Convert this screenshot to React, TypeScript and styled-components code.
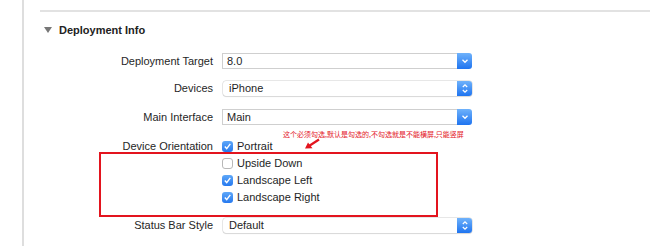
import React from "react";
import styled, { createGlobalStyle } from "styled-components";

const Global = createGlobalStyle`
  html, body { margin: 0; padding: 0; background: #fff; }
  body { font-family: "Liberation Sans", "Noto Sans", Arial, sans-serif; color: #262626; }
`;

const Page = styled.div`
  width: 650px;
  height: 246px;
  padding-left: 22px;
  box-sizing: border-box;
  overflow: hidden;
`;

const Panel = styled.div`
  position: relative;
  height: 246px;
  box-sizing: border-box;
  padding-top: 10px;
  border-left: 2px solid #dedede;
`;

const Separator = styled.div`
  margin-left: 16px;
  border-top: 2px solid #e2e2e2;
`;

const Header = styled.div`
  display: flex;
  align-items: center;
  gap: 7px;
  margin-left: 20px;
  margin-top: 11px;
  height: 14px;
  font-weight: bold;
  font-size: 11px;
  color: #222;
`;

const Triangle = styled.span`
  width: 0;
  height: 0;
  border-left: 4px solid transparent;
  border-right: 4px solid transparent;
  border-top: 6px solid #777;
`;

const Form = styled.div`
  display: flex;
  flex-direction: column;
  margin-top: 16px;
`;

const Row = styled.div<{ $mt: number }>`
  display: flex;
  align-items: center;
  height: 16px;
  margin-top: ${(p) => p.$mt}px;
`;

const Label = styled.div`
  width: 189px;
  margin-right: 9px;
  text-align: right;
  font-size: 11px;
  color: #262626;
  white-space: nowrap;
`;

const Combo = styled.div`
  display: flex;
  width: 250px;
  height: 16px;
`;

const Field = styled.div`
  flex: 1;
  box-sizing: border-box;
  border: 1px solid #cfcfcf;
  border-right: none;
  background: #fff;
  font-size: 11px;
  line-height: 14px;
  padding-left: 4px;
  color: #1e1e1e;
`;

const Popup = styled.div`
  display: flex;
  width: 249px;
  height: 15px;
  margin-left: 1px;
  border-radius: 3px;
  box-shadow: 0 0 0 0.5px #cfcfcf, 0 1px 1px rgba(0, 0, 0, 0.12);
`;

const PopupText = styled.div`
  flex: 1;
  font-size: 11px;
  line-height: 15px;
  padding-left: 6px;
  color: #1e1e1e;
`;

const BlueButton = styled.div`
  width: 15px;
  display: flex;
  align-items: center;
  justify-content: center;
  background: linear-gradient(#6fb2fb, #1f74f0);
  border-radius: 0 3px 3px 0;
`;

const CheckRow = styled.div`
  display: flex;
  align-items: center;
  gap: 4px;
  font-size: 11px;
  color: #1e1e1e;
`;

const Box = styled.div<{ $on: boolean }>`
  width: 11px;
  height: 11px;
  box-sizing: border-box;
  border-radius: 3px;
  display: flex;
  align-items: center;
  justify-content: center;
  background: ${(p) => (p.$on ? "linear-gradient(#5ea7f8, #2679ef)" : "#fff")};
  border: ${(p) => (p.$on ? "none" : "1px solid #b8b8b8")};
`;

const RedFrame = styled.div`
  position: absolute;
  left: 75px;
  top: 152px;
  width: 339px;
  height: 65px;
  box-sizing: border-box;
  border: 2px solid #e3141e;
`;

const Note = styled.div`
  position: absolute;
  left: 259px;
  top: 130px;
  font-size: 7px;
  line-height: 9px;
  color: #e3141e;
  white-space: nowrap;
  font-family: "Noto Sans CJK SC", sans-serif;
`;

const Arrow = styled.svg`
  position: absolute;
  left: 279px;
  top: 138px;
`;

const Down = () => (
  <svg width="8" height="6" viewBox="0 0 8 6">
    <path d="M1.5 1.8 L4 4.3 L6.5 1.8" stroke="#fff" strokeWidth="1.3" fill="none" />
  </svg>
);

const UpDown = () => (
  <svg width="8" height="11" viewBox="0 0 8 11">
    <path d="M1.8 4 L4 1.8 L6.2 4 M1.8 7 L4 9.2 L6.2 7" stroke="#fff" strokeWidth="1.2" fill="none" />
  </svg>
);

const Check = () => (
  <svg width="9" height="9" viewBox="0 0 9 9">
    <path d="M1.8 4.6 L3.7 6.6 L7.3 1.8" stroke="#fff" strokeWidth="1.4" fill="none" />
  </svg>
);

const Checkbox = ({ on, text }: { on: boolean; text: string }) => (
  <CheckRow>
    <Box $on={on}>{on && <Check />}</Box>
    {text}
  </CheckRow>
);

export default function App() {
  return (
    <>
      <Global />
      <Page>
        <Panel>
          <Separator />
          <Header>
            <Triangle />
            Deployment Info
          </Header>
          <Form>
            <Row $mt={0}>
              <Label>Deployment Target</Label>
              <Combo>
                <Field>8.0</Field>
                <BlueButton><Down /></BlueButton>
              </Combo>
            </Row>
            <Row $mt={11}>
              <Label>Devices</Label>
              <Popup>
                <PopupText>iPhone</PopupText>
                <BlueButton><UpDown /></BlueButton>
              </Popup>
            </Row>
            <Row $mt={13}>
              <Label>Main Interface</Label>
              <Combo>
                <Field>Main</Field>
                <BlueButton><Down /></BlueButton>
              </Combo>
            </Row>
            <Row $mt={13}>
              <Label>Device Orientation</Label>
              <Checkbox on text="Portrait" />
            </Row>
            <Row $mt={1}>
              <Label />
              <Checkbox on={false} text="Upside Down" />
            </Row>
            <Row $mt={1}>
              <Label />
              <Checkbox on text="Landscape Left" />
            </Row>
            <Row $mt={1}>
              <Label />
              <Checkbox on text="Landscape Right" />
            </Row>
            <Row $mt={12}>
              <Label>Status Bar Style</Label>
              <Popup>
                <PopupText>Default</PopupText>
                <BlueButton><UpDown /></BlueButton>
              </Popup>
            </Row>
          </Form>
          <RedFrame />
          <Note>这个必须勾选,默认是勾选的,不勾选就是不能横屏,只能竖屏</Note>
          <Arrow width="18" height="12" viewBox="0 0 18 12">
            <path d="M16 1.5 L6 8" stroke="#e3141e" strokeWidth="2.2" fill="none" />
            <path d="M2 10.5 L9.5 10.2 L5 4.5 Z" fill="#e3141e" />
          </Arrow>
        </Panel>
      </Page>
    </>
  );
}
